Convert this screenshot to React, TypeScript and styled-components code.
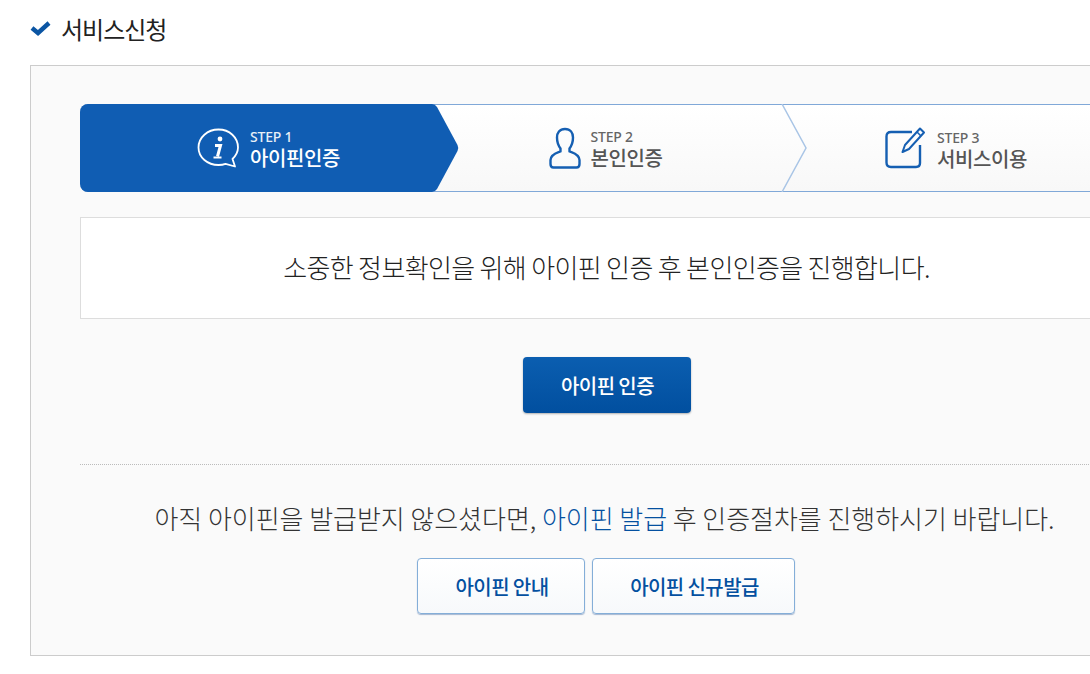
import React from "react";
import styled, { createGlobalStyle } from "styled-components";

const Global = createGlobalStyle`
  html, body { margin: 0; padding: 0; background: #fff; overflow: hidden; }
  body { font-family: "Noto Sans CJK KR", "Noto Sans", sans-serif; color: #333; }
`;
const Page = styled.div`
  width: 1183px;
  padding: 0 0 0 30px;
`;
const Title = styled.h2`
  display: flex;
  align-items: center;
  gap: 10px;
  height: 56px;
  margin: 0 0 9px;
  font-size: 24px;
  font-weight: 400;
  letter-spacing: -1px;
  color: #222;
  svg { flex: none; }
`;
const Panel = styled.section`
  box-sizing: border-box;
  width: 1153px;
  height: 591px;
  padding: 38px 49px 0;
  background: #fafafa;
  border: 1px solid #ccc;
`;
const Stepper = styled.ol`
  display: grid;
  grid-template-columns: repeat(3, 351px);
  height: 88px;
  margin: 0;
  padding: 0;
  list-style: none;
  box-sizing: border-box;
  border-top: 1px solid #80a8d8;
  border-bottom: 1px solid #80a8d8;
  border-radius: 8px;
  background: linear-gradient(#fff, #f8f8f8);
`;
const Step = styled.li<{ $active?: boolean; $shift: number; $pull?: number }>`
  position: relative;
  display: flex;
  align-items: center;
  justify-content: center;
  gap: 10px;
  padding-left: ${(p) => p.$shift}px;
  padding-right: ${(p) => p.$pull ?? 0}px;
  color: ${(p) => (p.$active ? "#fff" : "#555")};
  background: ${(p) => (p.$active ? "#105db3" : "transparent")};
  margin: ${(p) => (p.$active ? "-1px 0" : "0")};
  border-radius: ${(p) => (p.$active ? "8px 0 0 8px" : "0")};
`;
const Arrow = styled.svg<{ $top: number }>`
  position: absolute;
  top: ${(p) => p.$top}px;
  left: 100%;
  z-index: 1;
  margin-left: -1px;
`;
const StepText = styled.span<{ $drop?: number }>`
  display: flex;
  flex-direction: column;
  position: relative;
  top: ${(p) => p.$drop ?? 1}px;
`;
const StepLabel = styled.span`
  font-size: 14px;
  line-height: 16px;
  letter-spacing: -0.2px;
  font-family: "Noto Sans", sans-serif;
  font-weight: 500;
  opacity: 0.9;
`;
const StepName = styled.span`
  font-size: 20px;
  line-height: 24px;
  margin-top: 1px;
  font-weight: 500;
  letter-spacing: -0.4px;
`;
const Notice = styled.p`
  display: flex;
  align-items: center;
  justify-content: center;
  box-sizing: border-box;
  height: 102px;
  margin: 25px 0 38px;
  padding-bottom: 3px;
  background: #fff;
  border: 1px solid #ddd;
  font-size: 26px;
  font-weight: 300;
  letter-spacing: -0.65px;
  color: #222;
`;
const Center = styled.div<{ $nudge?: number }>`
  display: flex;
  justify-content: center;
  gap: 7px;
  padding-right: ${(p) => p.$nudge ?? 0}px;
`;
const Primary = styled.button`
  width: 168px;
  height: 56px;
  padding: 0 0 0 2px;
  border: 0;
  border-radius: 4px;
  background: linear-gradient(#0b5eb0, #014f9f);
  box-shadow: 0 1px 2px rgba(0, 0, 0, 0.3);
  color: #fff;
  font: 500 20px "Noto Sans CJK KR", sans-serif;
  letter-spacing: -0.6px;
`;
const Divider = styled.hr`
  height: 0;
  margin: 51px 0 33px;
  border: 0;
  border-top: 1px dotted #bbb;
`;
const Help = styled.p`
  margin: 0 0 20px;
  padding-right: 4px;
  height: 40px;
  line-height: 40px;
  text-align: center;
  font-size: 26px;
  font-weight: 300;
  letter-spacing: -0.04px;
  color: #333;
`;
const HelpLink = styled.a`
  color: #0450a0;
`;
const Secondary = styled.button<{ $width: number }>`
  box-sizing: border-box;
  width: ${(p) => p.$width}px;
  height: 56px;
  padding: 0 0 0 2px;
  border: 1px solid #84aed8;
  border-radius: 4px;
  background: linear-gradient(#fff, #f7f9fb);
  box-shadow: 0 1px 1px rgba(60, 100, 160, 0.45);
  color: #0450a0;
  font: 500 20px "Noto Sans CJK KR", sans-serif;
  letter-spacing: -0.6px;
`;

const Check = () => (
  <svg width="21" height="16" viewBox="0 0 21 16">
    <path d="M2 8 L8 13 L19 3" fill="none" stroke="#0b55a3" strokeWidth="4.4" />
  </svg>
);
const InfoIcon = () => (
  <svg width="43" height="40" viewBox="0 0 43 40" fill="none" stroke="#fff" strokeWidth="1.800">
    <path d="M21.500 1.500C10.500 1.500 1.500 9.500 1.500 19.500S10.500 37 21.500 37c2.800 0 5-.4 7-1.200L38 38.500l-2.500-7.500C39 27.500 41 24 41 19.500 41 9.500 32.500 1.500 21.500 1.500Z" strokeLinejoin="round" />
    <circle cx="23" cy="11" r="2.400" fill="#fff" stroke="none" />
    <path d="M18 17.500h5.500L20.500 28.500" strokeWidth="3" />
    <path d="M16.500 29.500h8" strokeWidth="2" />
  </svg>
);
const UserIcon = () => (
  <svg width="32" height="42" viewBox="0 0 32 42" fill="none" stroke="#155fb2" strokeWidth="2.400">
    <path d="M16 2c-5.500 0-8 4-8 8.500 0 5 2 9 3.500 11v3C8 26 2 27 1.500 33v4c0 2 1 3.500 3 3.500h23c2 0 3-1.500 3-3.500v-4C30 27 24 26 20.500 24.500v-3C22 19.500 24 15.500 24 10.500 24 6 21.500 2 16 2Z" strokeLinejoin="round" />
  </svg>
);
const EditIcon = () => (
  <svg width="42" height="42" viewBox="0 0 42 42" fill="none" stroke="#155fb2">
    <path d="M27 5H6C3 5 1.500 6.500 1.500 9.500v26C1.500 38.500 3 40 6 40h25c2.500 0 4-1.500 4-4V18" strokeWidth="2.400" />
    <path d="M35 1.500l4 4L24 22l-6.500 3 2.500-7Z" strokeWidth="2" strokeLinejoin="round" />
    <path d="M32 5l4 4" strokeWidth="1.600" />
  </svg>
);
const FilledArrow = () => (
  <Arrow $top={0} width="29" height="88" viewBox="0 0 29 88">
    <path d="M0 0H2Q5 0 7 3L27.500 41Q29 44 27.500 47L7 85Q5 88 2 88H0Z" fill="#105db3" />
  </Arrow>
);
const LineArrow = () => (
  <Arrow $top={-1} width="27" height="88" viewBox="0 0 27 88">
    <path d="M1 0L25 44L1 88" fill="none" stroke="#a9c5e6" strokeWidth="1.500" />
  </Arrow>
);

export default function App() {
  return (
    <Page>
      <Global />
      <Title><Check />서비스신청</Title>
      <Panel>
        <Stepper>
          <Step $active $shift={26}>
            <InfoIcon />
            <StepText>
              <StepLabel>STEP 1</StepLabel>
              <StepName>아이핀인증</StepName>
            </StepText>
            <FilledArrow />
          </Step>
          <Step $shift={0} $pull={2}>
            <UserIcon />
            <StepText>
              <StepLabel>STEP 2</StepLabel>
              <StepName>본인인증</StepName>
            </StepText>
            <LineArrow />
          </Step>
          <Step $shift={0} $pull={3}>
            <EditIcon />
            <StepText $drop={2}>
              <StepLabel>STEP 3</StepLabel>
              <StepName>서비스이용</StepName>
            </StepText>
          </Step>
        </Stepper>
        <Notice>소중한 정보확인을 위해 아이핀 인증 후 본인인증을 진행합니다.</Notice>
        <Center><Primary>아이핀 인증</Primary></Center>
        <Divider />
        <Help>
          아직 아이핀을 발급받지 않으셨다면, <HelpLink>아이핀 발급</HelpLink> 후 인증절차를 진행하시기 바랍니다.
        </Help>
        <Center $nudge={1}>
          <Secondary $width={168}>아이핀 안내</Secondary>
          <Secondary $width={203}>아이핀 신규발급</Secondary>
        </Center>
      </Panel>
    </Page>
  );
}
